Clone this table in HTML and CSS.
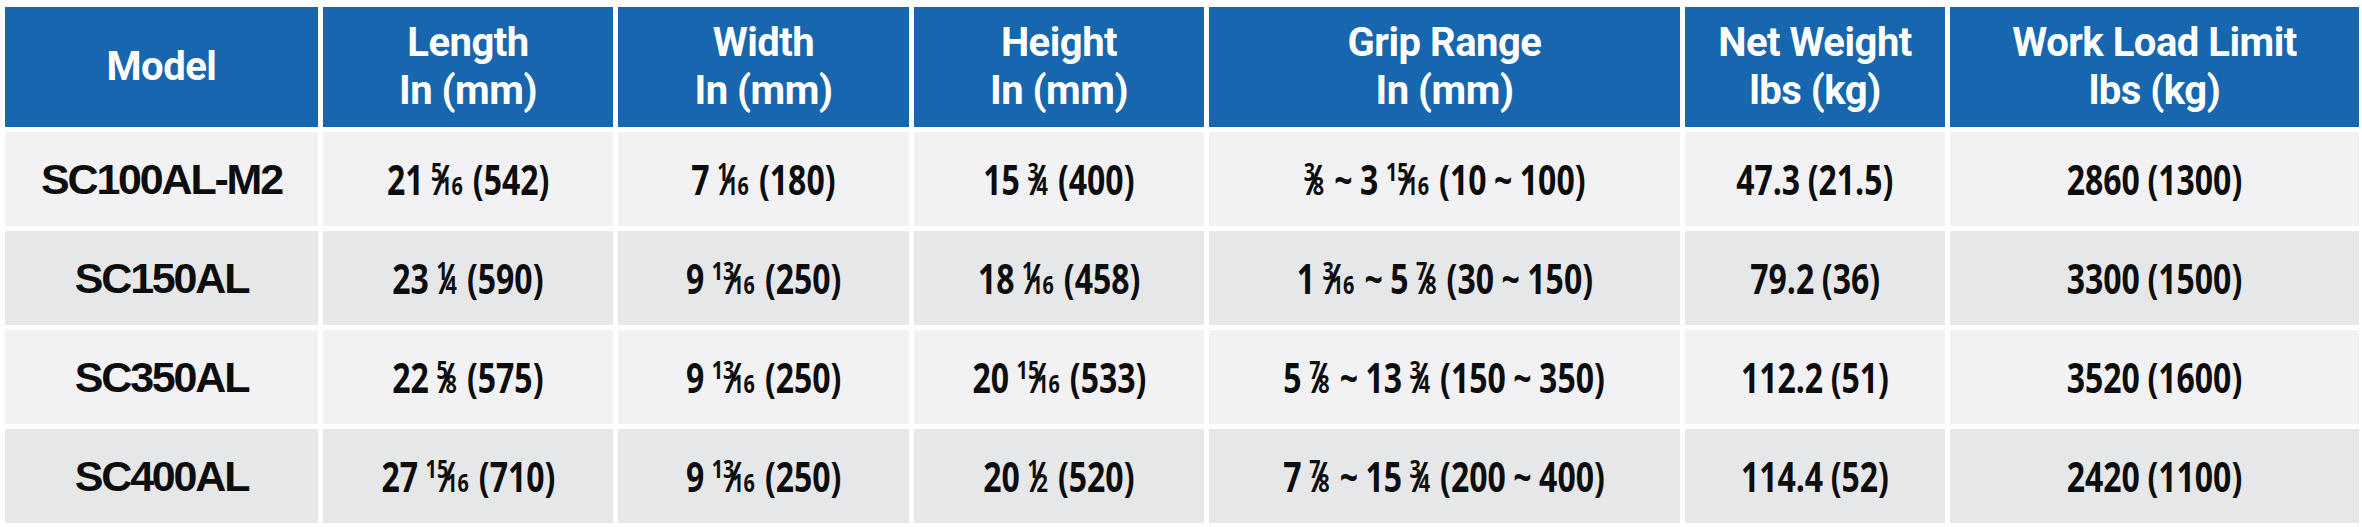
FILE: index.html
```html
<!DOCTYPE html>
<html lang="en">
<head>
    <meta charset="UTF-8">
    <title>Clamp Specifications</title>
    <link rel="stylesheet" href="styles.css">
</head>
<body>
    <div class="spec">
        <div class="row head">
            <div class="cell">Model</div>
            <div class="cell">Length<br>In (mm)</div>
            <div class="cell">Width<br>In (mm)</div>
            <div class="cell">Height<br>In (mm)</div>
            <div class="cell">Grip Range<br>In (mm)</div>
            <div class="cell">Net Weight<br>lbs (kg)</div>
            <div class="cell">Work Load Limit<br>lbs (kg)</div>
        </div>
        <div class="row light">
            <div class="cell model">SC100AL-M2</div>
            <div class="cell"><span class="val">21 <span class="frac"><span class="num">5</span><span class="sl">⁄</span><span class="den">16</span></span> (542)</span></div>
            <div class="cell"><span class="val">7 <span class="frac"><span class="num">1</span><span class="sl">⁄</span><span class="den">16</span></span> (180)</span></div>
            <div class="cell"><span class="val">15 <span class="frac"><span class="num">3</span><span class="sl">⁄</span><span class="den">4</span></span> (400)</span></div>
            <div class="cell"><span class="val"><span class="frac"><span class="num">3</span><span class="sl">⁄</span><span class="den">8</span></span> ~ 3 <span class="frac"><span class="num">15</span><span class="sl">⁄</span><span class="den">16</span></span> (10 ~ 100)</span></div>
            <div class="cell"><span class="val">47.3 (21.5)</span></div>
            <div class="cell"><span class="val">2860 (1300)</span></div>
        </div>
        <div class="row dark">
            <div class="cell model">SC150AL</div>
            <div class="cell"><span class="val">23 <span class="frac"><span class="num">1</span><span class="sl">⁄</span><span class="den">4</span></span> (590)</span></div>
            <div class="cell"><span class="val">9 <span class="frac"><span class="num">13</span><span class="sl">⁄</span><span class="den">16</span></span> (250)</span></div>
            <div class="cell"><span class="val">18 <span class="frac"><span class="num">1</span><span class="sl">⁄</span><span class="den">16</span></span> (458)</span></div>
            <div class="cell"><span class="val">1 <span class="frac"><span class="num">3</span><span class="sl">⁄</span><span class="den">16</span></span> ~ 5 <span class="frac"><span class="num">7</span><span class="sl">⁄</span><span class="den">8</span></span> (30 ~ 150)</span></div>
            <div class="cell"><span class="val">79.2 (36)</span></div>
            <div class="cell"><span class="val">3300 (1500)</span></div>
        </div>
        <div class="row light">
            <div class="cell model">SC350AL</div>
            <div class="cell"><span class="val">22 <span class="frac"><span class="num">5</span><span class="sl">⁄</span><span class="den">8</span></span> (575)</span></div>
            <div class="cell"><span class="val">9 <span class="frac"><span class="num">13</span><span class="sl">⁄</span><span class="den">16</span></span> (250)</span></div>
            <div class="cell"><span class="val">20 <span class="frac"><span class="num">15</span><span class="sl">⁄</span><span class="den">16</span></span> (533)</span></div>
            <div class="cell"><span class="val">5 <span class="frac"><span class="num">7</span><span class="sl">⁄</span><span class="den">8</span></span> ~ 13 <span class="frac"><span class="num">3</span><span class="sl">⁄</span><span class="den">4</span></span> (150 ~ 350)</span></div>
            <div class="cell"><span class="val">112.2 (51)</span></div>
            <div class="cell"><span class="val">3520 (1600)</span></div>
        </div>
        <div class="row dark">
            <div class="cell model">SC400AL</div>
            <div class="cell"><span class="val">27 <span class="frac"><span class="num">15</span><span class="sl">⁄</span><span class="den">16</span></span> (710)</span></div>
            <div class="cell"><span class="val">9 <span class="frac"><span class="num">13</span><span class="sl">⁄</span><span class="den">16</span></span> (250)</span></div>
            <div class="cell"><span class="val">20 <span class="frac"><span class="num">1</span><span class="sl">⁄</span><span class="den">2</span></span> (520)</span></div>
            <div class="cell"><span class="val">7 <span class="frac"><span class="num">7</span><span class="sl">⁄</span><span class="den">8</span></span> ~ 15 <span class="frac"><span class="num">3</span><span class="sl">⁄</span><span class="den">4</span></span> (200 ~ 400)</span></div>
            <div class="cell"><span class="val">114.4 (52)</span></div>
            <div class="cell"><span class="val">2420 (1100)</span></div>
        </div>
    </div>
</body>
</html>
```

FILE: styles.css
```css
body {
    margin: 0;
    padding: 7px 0 0 5px;
    background-color: #ffffff;
}
.spec {
    display: flex;
    flex-direction: column;
    gap: 5px;
    width: 2354px;
}
.row {
    display: grid;
    grid-template-columns: 313px 290px 291px 290px 471px 260px 409px;
    gap: 5px;
    height: 94px;
}
.cell {
    display: flex;
    align-items: center;
    justify-content: center;
    text-align: center;
    font-family: "Open Sans", "Liberation Sans", sans-serif;
    font-weight: 700;
    font-size: 41px;
    color: #0d0d0d;
    white-space: nowrap;
}
.val {
    display: inline-block;
    transform: scaleX(0.78);
    word-spacing: -1px;
}
.head {
    height: 120px;
}
.head .cell {
    background-color: #1766ae;
    color: #ffffff;
    font-family: Roboto, "Liberation Sans", sans-serif;
    font-weight: bold;
    font-size: 40px;
    line-height: 48px;
    letter-spacing: -0.5px;
}
.light .cell {
    background-color: #f2f2f4;
}
.dark .cell {
    background-color: #e6e7e9;
}
.model {
    font-family: "Liberation Sans", Arial, sans-serif;
    font-weight: bold;
    font-size: 43px;
    letter-spacing: -2.2px;
}
.frac {
    margin: 0 0.08em 0 0;
}
.frac .num,
.frac .den {
    font-size: 0.62em;
}
.frac .num {
    position: relative;
    top: -0.55em;
}
.frac .sl {
    margin: 0 -0.1em;
}
```
